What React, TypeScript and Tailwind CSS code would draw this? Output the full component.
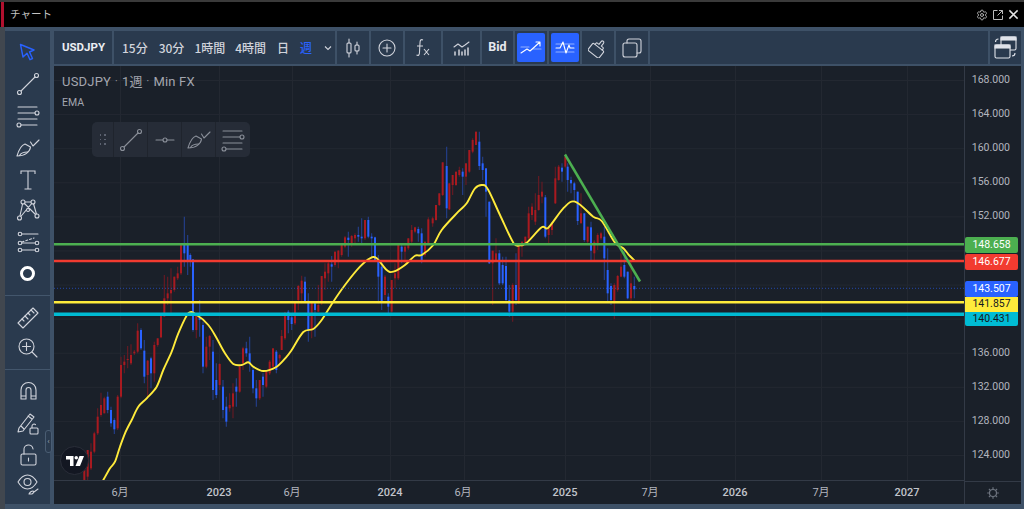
import React from "react";
import { Settings } from "lucide-react";

type C = [number, number, number, number, number, number];
// [x, wickTop, bodyTop, bodyBottom, wickBottom, 0 red / 1 blue] in reference crops' coordinates
const a: C[] = [
[73,760,780,810,810,0],[83,720,720,800,810,0],[93,700,725,775,780,0],[103,665,670,725,730,0],[113,595,620,670,675,0],[123,548,585,615,620,0],[133,560,565,610,610,0],[143,545,560,600,610,1],[153,590,600,640,650,1],[163,625,630,658,672,1],[173,555,560,655,660,0],[183,440,465,560,565,0],[193,435,455,465,490,0],[203,408,447,450,475,0],[213,403,435,460,465,0],[223,420,425,430,435,0],[233,340,362,425,430,0],[243,355,360,415,420,1],[253,390,422,500,520,1],[263,450,452,495,560,0],[273,440,445,490,535,1],[283,395,405,490,515,0],[293,385,385,405,410,0],[303,310,310,382,385,0],[313,195,265,320,320,0],[323,200,250,265,285,0],[333,175,240,250,315,0],[343,200,200,240,245,0],[353,170,190,205,210,0],[363,100,100,190,195,0],[373,20,100,130,170,1],[383,75,105,150,195,1],[391,130,135,155,170,1],[399,148,148,360,365,1],[409,310,310,360,385,0],[419,270,322,330,380,1],[429,335,345,470,490,1],[439,380,410,470,475,0],[449,375,378,410,450,0],[459,390,425,540,570,1],[469,460,510,555,565,1],[479,460,462,525,540,0],[489,510,530,600,625,1],[499,560,590,635,650,1],[509,550,585,595,605,0],[519,520,550,590,625,0],[529,505,530,545,590,1],[539,465,470,545,548,0],[549,410,415,460,480,0],[559,395,415,430,440,1],[569,380,430,460,485,1],[579,470,480,535,550,1],[589,510,535,565,590,1],[599,510,510,565,570,0],[609,490,500,525,560,1],[619,485,485,530,535,0],[629,450,455,490,495,0],[639,415,415,470,475,0],[649,420,425,480,490,1],[659,432,435,445,460,0],
];
const b: C[] = [
[5,600,618,660,660,0],[15,545,548,625,630,0],[25,540,545,570,610,1],[35,550,562,582,600,1],[45,515,515,580,585,0],[55,465,468,510,540,0],[65,437,452,490,520,0],[75,440,455,515,515,1],[85,490,512,600,635,1],[95,518,518,600,625,0],[105,515,520,540,620,1],[115,465,525,545,545,0],[125,438,438,520,525,0],[135,400,425,445,480,0],[145,395,400,430,455,0],[155,378,403,410,455,1],[165,365,365,405,410,0],[175,360,362,390,415,0],[185,345,345,375,380,0],[195,318,322,350,355,0],[205,305,323,330,380,1],[215,315,318,340,350,0],[225,310,315,325,340,0],[235,290,315,320,335,1],[245,265,320,325,340,1],[255,270,270,325,330,0],[265,260,270,320,325,1],[275,310,320,325,385,1],[285,320,322,390,395,1],[295,375,395,440,520,1],[305,395,410,515,540,1],[315,435,440,495,510,0],[325,490,500,530,555,1],[335,450,450,545,548,0],[345,400,430,445,475,0],[355,345,345,445,450,0],[365,340,350,365,400,1],[375,340,350,365,400,0],[385,325,325,355,360,0],[395,285,300,335,340,0],[405,290,292,305,310,0],[415,290,297,310,335,1],[425,295,310,395,400,1],[435,335,335,375,380,0],[445,262,268,340,340,0],
];
const c: C[] = [
[8,290,295,310,320,0],[18,255,255,300,302,0],[28,220,220,255,258,0],[38,127,127,225,228,0],[50,80,138,265,295,1],[58,190,190,268,270,0],[68,165,165,195,225,0],[78,155,155,195,198,0],[88,140,150,165,170,0],[98,145,155,170,225,1],[108,130,130,170,195,0],[118,90,90,155,158,0],[128,55,60,95,100,0],[138,35,35,75,75,0],[148,35,65,138,150,1],[158,110,130,150,180,1],[168,145,145,215,290,1],[178,245,245,430,432,1],[188,392,392,430,555,0],[198,355,400,420,425,0],[208,390,400,490,495,1],[218,410,435,490,495,1],[228,410,438,540,545,1],[238,495,540,575,590,1],[248,490,495,575,605,0],[258,400,495,540,555,1],[266,370,370,550,552,0],[276,365,365,380,410,0],[286,350,350,375,378,0],[296,260,280,355,360,0],[306,250,260,285,300,0],[316,220,270,305,315,0],[326,168,225,270,272,0],[336,185,215,230,250,0],[346,225,232,350,355,1],[356,320,325,345,375,0],[366,305,310,330,345,0],[376,140,175,250,252,0],[386,135,140,180,182,0],[396,130,143,155,185,1],[406,105,110,140,145,0],[413,130,140,180,215,1],[423,170,180,190,220,1],[433,185,190,210,245,1],[443,215,215,303,315,1],[453,220,280,310,310,0],[463,280,280,360,365,1],[473,320,320,365,370,0],[483,305,322,392,420,1],[493,360,365,400,425,0],[503,340,345,370,390,0],[513,335,340,355,360,0],[523,320,350,415,480,1],[533,385,450,520,545,1],[543,490,498,540,555,1],[553,490,495,545,597,0],[563,465,468,510,515,0],[573,400,440,470,472,0],[583,385,435,470,475,1],[593,455,455,535,538,1],[603,425,490,535,542,0],[613,470,498,508,535,1],
];
const conv = (list: C[], ox: number, oy: number): C[] =>
  list.map(([x, w1, b1, b2, w2, k]) => [ox + x / 3, oy + w1 / 3, oy + b1 / 3, oy + b2 / 3, oy + w2 / 3, k] as C);
const candles: C[] = [...conv(a, 60, 210), ...conv(b, 280, 130), ...conv(c, 430, 120)];

const emaRaw: [number[][], number, number][] = [
  [[[130,810],[150,775],[165,755],[180,710],[195,670],[215,630],[235,590],[260,565],[290,530],[310,480],[335,425],[355,370],[385,310],[410,315],[445,345],[470,385],[495,430],[520,462],[545,465],[565,457],[580,470],[610,483],[650,470],[680,440]], 60, 210],
  [[[35,660],[70,606],[100,597],[125,570],[160,515],[195,465],[240,410],[270,385],[290,385],[320,420],[340,425],[375,405],[405,377],[425,375],[460,345]], 280, 130],
  [[[35,330],[85,275],[110,250],[135,205],[158,195],[175,210],[210,285],[250,368],[270,376],[290,368],[335,322],[355,323],[400,265],[435,245],[490,290],[515,303],[555,368],[580,385],[595,403],[612,420]], 430, 120],
];
const emaPts = emaRaw.flatMap(([pts, ox, oy]) => pts.map(([x, y]) => [ox + x / 3, oy + y / 3]));
const ema = emaPts
  .map((p, i) => {
    if (i === 0) return `M${p[0].toFixed(1)} ${p[1].toFixed(1)}`;
    const p0 = emaPts[Math.max(0, i - 2)];
    const p1 = emaPts[i - 1];
    const p3 = emaPts[Math.min(emaPts.length - 1, i + 1)];
    const c1 = [p1[0] + (p[0] - p0[0]) / 6, p1[1] + (p[1] - p0[1]) / 6];
    const c2 = [p[0] - (p3[0] - p1[0]) / 6, p[1] - (p3[1] - p1[1]) / 6];
    return `C${c1[0].toFixed(1)} ${c1[1].toFixed(1)} ${c2[0].toFixed(1)} ${c2[1].toFixed(1)} ${p[0].toFixed(1)} ${p[1].toFixed(1)}`;
  })
  .join(" ");

const gridY = Array.from({ length: 12 }, (_, i) => 80.5 + i * 34.09);
const prices = ["168.000","164.000","160.000","156.000","152.000","","","","136.000","132.000","128.000","124.000"];
const times: [string, number, boolean][] = [["6月",120,false],["2023",219,true],["6月",292,false],["2024",390,true],["6月",463,false],["2025",565,true],["7月",650,false],["2026",735,true],["7月",821,false],["2027",907,true]];
const vlines = [120, 219, 292, 390, 464, 565, 650, 735, 821, 907];

const Ic = ({ children, w = 24, h = 24, className = "text-[#d1d4dc]" }: { children: React.ReactNode; w?: number; h?: number; className?: string }) => (
  <svg width={w} height={h} viewBox={`0 0 ${w} ${h}`} fill="none" stroke="currentColor" strokeWidth={1.1} className={className} strokeLinecap="round" strokeLinejoin="round">{children}</svg>
);

const BrushPaths = () => (<><path d="M1 20C3 13 6 9 9 8L14.500 11C14 16 9 20 1 20Z"/><path d="M3.500 19.500C5 17 8 16 11.500 16"/><path d="M14.500 6 17 10 23 4"/></>);
const FibPaths = () => (<><path d="M2 3h19M2 9h17M2 15h19M5 21h16"/><circle cx="21" cy="9" r="2"/><circle cx="3" cy="21" r="2"/></>);
const TrendPaths = () => (<><circle cx="3.500" cy="20.500" r="2"/><circle cx="20.500" cy="3.500" r="2"/><path d="M5 19 19 5"/></>);
const Rail = ({ children, h }: { children: React.ReactNode; h: string }) => (
  <div className={"flex items-center justify-center shrink-0 " + h}>{children}</div>
);
const RB = "#2a3a4e";

export default function App() {
  return (
    <div className="w-[1024px] h-[509px] overflow-hidden flex flex-col bg-[#3e5167] font-['Roboto','Noto_Sans_CJK_JP',sans-serif] text-[#d1d4dc]">
      {/* title bar */}
      <div className="h-[27px] shrink-0 flex items-stretch bg-black border-t-[2px] border-[#3a3a3a] pl-px">
        <div className="w-[3px] bg-[#b0102e]" />
        <div className="flex items-center pl-[6px] text-[10.500px] text-[#c4c4c4] font-['Noto_Sans_CJK_JP',sans-serif] pb-px">チャート</div>
        <div className="ml-auto flex items-center gap-[4px] pr-[5px] text-[#bcbcbc]">
          <Settings size={12} strokeWidth={1.8} />
          <svg width="12" height="12" viewBox="0 0 24 24" fill="none" stroke="currentColor" strokeWidth="2"><path d="M11 3H3v18h18v-8M14 3h7v7M21 3 11 13"/></svg>
          <svg width="11" height="11" viewBox="0 0 24 24" fill="none" stroke="#e4e4e4" strokeWidth="3.200"><path d="M3 3l18 18M21 3 3 21"/></svg>
        </div>
      </div>

      {/* body */}
      <div className="flex-1 min-h-0 flex border-l-[5px] border-[#41474f] pr-[3px] pt-[4px] pb-[5px] bg-[#3e5167]">
        {/* left rail */}
        <div className="w-[45px] shrink-0 flex flex-col bg-[#2a3a4e] mr-[4px]">
          <div className="h-[265px] shrink-0 pt-[5px] flex flex-col border-b border-[#43566c]">
            <Rail h="h-[32px]"><svg width="17" height="18" viewBox="0 0 17 18" fill="none" stroke="#2962ff" strokeWidth="1.400" strokeLinejoin="round"><path d="M1.500 1.500 15 7l-4.500 2 3 6.500-2.500 1.200-3-6.500L4 14Z"/></svg></Rail>
            <Rail h="h-[32px]"><Ic><TrendPaths /></Ic></Rail>
            <Rail h="h-[31px]"><Ic><FibPaths /></Ic></Rail>
            <Rail h="h-[34px]"><Ic><BrushPaths /></Ic></Rail>
            <Rail h="h-[30px]"><svg width="24" height="24" viewBox="0 0 24 24" fill="none" stroke="#d1d4dc" strokeWidth="1.100"><path d="M5 6V3h14v3M12 3v18M8.500 21h7"/></svg></Rail>
            <Rail h="h-[29px]"><Ic><path d="M3.500 20 7 4 21 18 17 4 3.500 20M7 4h10"/><circle cx="3.500" cy="20" r="2" fill={RB}/><circle cx="7" cy="4" r="2" fill={RB}/><circle cx="17" cy="4" r="2" fill={RB}/><circle cx="21" cy="18" r="2" fill={RB}/><circle cx="12" cy="12" r="1.500" fill={RB}/></Ic></Rail>
            <Rail h="h-[36px]"><Ic><path d="M6 4h16M6 20h13M6 13h13"/><path d="M6 12 18 8" strokeDasharray="2 2"/><circle cx="4" cy="4" r="1.800" fill={RB}/><circle cx="4" cy="13" r="1.800" fill={RB}/><circle cx="4" cy="20" r="1.800" fill={RB}/><circle cx="21" cy="13" r="1.800" fill={RB}/><circle cx="21" cy="20" r="1.800" fill={RB}/></Ic></Rail>
            <Rail h="h-[26px]"><div className="w-[15px] h-[15px] rounded-full border-[3px] border-white" /></Rail>
          </div>
          <div className="h-[74px] shrink-0 pt-[7px] flex flex-col border-b border-[#43566c]">
            <Rail h="h-[30px]"><Ic><path d="M2 17 17 2l5 5L7 22Z"/><path d="M6 13l2 2M9 10l3 3M12 7l2 2M15 4l3 3"/></Ic></Rail>
            <Rail h="h-[30px]"><Ic><circle cx="10.500" cy="10.500" r="7.500"/><path d="M6.500 10.500h8M10.500 6.500v8M16 16l5 5"/></Ic></Rail>
          </div>
          <div className="flex-1 flex flex-col pt-[5px] relative">
            <Rail h="h-[32px]"><Ic><path d="M5 20V11a7.500 7.500 0 0 1 15 0v9h-5v-9a2.500 2.500 0 0 0-5 0v9ZM5 17h5M15 17h5"/></Ic></Rail>
            <Rail h="h-[32px]"><Ic><path d="M3 17 14 3l4 3L7 20l-5 1ZM5 15l3 3M12 5l4 3"/><rect x="14" y="17" width="8" height="6" rx="1"/><path d="M16 17v-2a2 2 0 0 1 3.500-1.300"/></Ic></Rail>
            <Rail h="h-[32px]"><Ic><rect x="5" y="11" width="15" height="11" rx="1.500"/><path d="M8 11V7a4.500 4.500 0 0 1 9-1"/><path d="M12.500 15v3"/></Ic></Rail>
            <Rail h="h-[26px]"><Ic><path d="M2 10c3-5 6-7 9.500-7S18 5 21 10c-3 5-6 7-9.500 7S5 15 2 10Z"/><circle cx="11.500" cy="10" r="3.500"/><path d="M13 22c1-2 3-3 4-3 1 0 1 2-1 3ZM18 20l4-3"/></Ic></Rail>
            <div className="absolute right-[-2px] top-[60px] z-20 w-[7px] h-[23px] rounded-[3px] bg-[#2a3a4e] border border-[#4a5d73] flex items-center justify-center text-[8px] text-[#9aa5b1]">‹</div>
          </div>
        </div>

        {/* right column */}
        <div className="flex-1 min-w-0 flex flex-col">
          {/* toolbar */}
          <div className="h-[33px] shrink-0 flex items-stretch bg-[#2a3a4e] text-[12px] font-medium text-[#d1d4dc]">
            <div className="w-[60px] flex items-center justify-center font-bold text-[11.500px] text-[#eceef2] border-r-[2px] border-[#3e5167] pl-[1px]">USDJPY</div>
            <div className="w-[223px] flex items-center gap-[11px] pl-[8px] border-r-[2px] border-[#3e5167] font-['Noto_Sans_CJK_JP',sans-serif] text-[12px]">
              <span>15分</span><span>30分</span><span className="-ml-[1px]">1時間</span><span className="-ml-[1px]">4時間</span><span>日</span><span className="text-[#2962ff]">週</span>
              <svg className="ml-[1px]" width="8" height="6" viewBox="0 0 8 6" fill="none" stroke="#d1d4dc" strokeWidth="1.100"><path d="M1 1.500 4 4.500 7 1.500"/></svg>
            </div>
            <div className="w-[34px] flex items-center justify-center border-r-[2px] border-[#3e5167]">
              <Ic w={16} h={20}><rect x="2" y="5" width="4" height="10" rx="1"/><path d="M4 1v4M4 15v4"/><rect x="10" y="7" width="4" height="6" rx="1"/><path d="M12 4v3M12 13v3"/></Ic>
            </div>
            <div className="w-[34px] flex items-center justify-center border-r-[2px] border-[#3e5167]">
              <Ic w={18} h={18}><circle cx="9" cy="9" r="8"/><path d="M5 9h8M9 5v8"/></Ic>
            </div>
            <div className="w-[38px] flex items-center justify-center border-r-[2px] border-[#3e5167]">
              <svg width="14" height="18" viewBox="0 0 14 18" fill="none" stroke="#d1d4dc" strokeWidth="1.100"><path d="M7 1c-2-1-3 0-3 3l-.5 9c0 3-1 4-3 3"/><path d="M1 7h6M8 10l5 6M13 10l-5 6" /></svg>
            </div>
            <div className="w-[39px] flex items-center justify-center border-r-[2px] border-[#3e5167]">
              <Ic w={18} h={18}><path d="M1 8l4-3 4 3 3-2 4-3" /><path d="M2 16v-3M6 16v-5M9 16v-3M12 16v-5M15 16v-7" strokeWidth="1.500"/></Ic>
            </div>
            <div className="w-[33px] flex items-center justify-center font-bold text-[12.500px] text-[#e6e8ee] border-r-[2px] border-[#3e5167]">Bid</div>
            <div className="w-[34px] flex items-center justify-center border-r-[2px] border-[#3e5167]">
              <div className="w-[28px] h-[29px] rounded-[2px] bg-[#2962ff] flex items-center justify-center">
                <Ic w={22} h={18} className="text-white"><path d="M1 14l6-4 3 2 10-9M16 3h4v4"/><path d="M1 8h8M13 10h8" opacity="0.500"/></Ic>
              </div>
            </div>
            <div className="w-[33px] flex items-center justify-center border-r-[2px] border-[#3e5167]">
              <div className="w-[28px] h-[29px] rounded-[2px] bg-[#2962ff] flex items-center justify-center">
                <Ic w={20} h={18} className="text-white"><path d="M1 9h4l3-6 3 11 3-8 1 3h4"/><path d="M1 5h18M1 13h18" opacity="0.500"/></Ic>
              </div>
            </div>
            <div className="w-[34px] flex items-center justify-center border-r-[2px] border-[#3e5167]">
              <Ic w={20} h={20}><g transform="rotate(38 10 10)"><rect x="3" y="9" width="14" height="9" rx="1.500"/><path d="M5.500 9V7.500a1 1 0 0 1 1-1H8.500V3a1.500 1.500 0 0 1 3 0v3.500h2a1 1 0 0 1 1 1V9"/></g></Ic>
            </div>
            <div className="w-[34px] flex items-center justify-center border-r-[2px] border-[#3e5167]">
              <Ic w={20} h={20}><rect x="1" y="5" width="14" height="14" rx="2"/><path d="M5 5V3a2 2 0 0 1 2-2h10a2 2 0 0 1 2 2v10a2 2 0 0 1-2 2h-2"/></Ic>
            </div>
            <div className="flex-1" />
            <div className="w-[33px] flex items-center justify-center border-l-[2px] border-[#3e5167]">
              <svg width="23" height="23" viewBox="0 0 23 23" fill="none" stroke="#e0e3ea" strokeWidth="1.100"><rect x="7" y="1" width="15" height="13" rx="1.500"/><rect x="7" y="1" width="15" height="3" fill="#e0e3ea"/><rect x="1" y="9" width="15" height="13" rx="1.500" fill={RB}/><rect x="1" y="9" width="15" height="3" fill="#e0e3ea"/><path d="M1.500 6c0-2 1-3 3-3M21 17c0 2-1 3-3 3"/></svg>
            </div>
          </div>

          {/* chart */}
          <div className="flex-1 min-h-0 flex mt-[2px] bg-[#1a2029] relative">
            <div className="flex-1 min-w-0 flex flex-col border-r border-[#333a46]">
              <div className="flex-1 min-h-0 relative overflow-hidden">
                {/* chart drawing: viewBox keeps the coordinates as page coordinates */}
                <svg className="absolute left-0 top-0" width="910" height="414" viewBox="54 66 910 414">
                  {vlines.map((x) => <line key={x} x1={x + 0.5} x2={x + 0.5} y1={66} y2={480} stroke="#232831" strokeWidth="1" />)}
                  {gridY.map((y, i) => <line key={i} x1={54} x2={964} y1={y} y2={y} stroke="#232831" strokeWidth="1" />)}
                  {candles.map(([x, w1, b1, b2, w2, k], i) => (
                    <g key={i}>
                      <line x1={x} x2={x} y1={w1} y2={w2} stroke={k ? "#24408f" : "#6a1a24"} strokeWidth="1.100" />
                      <rect x={x - 1} y={b1} width="2" height={Math.max(1, b2 - b1)} fill={k ? "#2962ff" : "#a81a20"} />
                    </g>
                  ))}
                  <path d={ema} fill="none" stroke="#ffeb3b" strokeWidth="1.900" strokeLinejoin="round" strokeLinecap="round" />
                  <line x1={54} x2={964} y1={244.300} y2={244.300} stroke="#4caf50" strokeWidth="2.400" />
                  <line x1={54} x2={964} y1={261} y2={261} stroke="#f23b30" strokeWidth="2.600" />
                  <line x1={54} x2={964} y1={288.300} y2={288.300} stroke="#2962ff" strokeWidth="1" strokeDasharray="1 2" opacity="0.600" />
                  <line x1={54} x2={964} y1={302.300} y2={302.300} stroke="#ffeb3b" strokeWidth="2.400" />
                  <line x1={54} x2={964} y1={314.300} y2={314.300} stroke="#00bcd4" strokeWidth="3.400" />
                  <line x1={565} y1={154.500} x2={640} y2={281.500} stroke="#4caf50" strokeWidth="2.500" />
                </svg>

                <div className="absolute left-[8px] top-[7px] flex flex-col text-[#a3a6af] pointer-events-none">
                  <div className="text-[13px] leading-[17px] tracking-[0.2px] flex items-center">
                    <span>USDJPY</span><span className="mx-[4px] text-[10px]">·</span><span>1週</span><span className="mx-[4px] text-[10px]">·</span><span>Min FX</span>
                  </div>
                  <div className="text-[10.500px] mt-[6px] leading-[13px]">EMA</div>
                </div>

                {/* floating drawing bar */}
                <div className="absolute left-[38px] top-[56px] h-[35px] flex items-stretch rounded-[5px] bg-[#262c37] text-[#878c96]">
                  <div className="w-[22px] flex items-center justify-center border-r border-[#1f242d]">
                    <div className="grid grid-cols-2 gap-x-[3px] gap-y-[3px]">
                      {[0, 1, 2, 3, 4, 5].map((i) => <span key={i} className="w-[1.500px] h-[1.500px] bg-[#5c6270]" />)}
                    </div>
                  </div>
                  <div className="w-[34px] flex items-center justify-center border-r border-[#1f242d]"><Ic className="text-[#8a8f99]"><TrendPaths /></Ic></div>
                  <div className="w-[34px] flex items-center justify-center border-r border-[#1f242d]"><Ic className="text-[#8a8f99]"><path d="M3 12h7M14 12h7"/><circle cx="12" cy="12" r="2"/></Ic></div>
                  <div className="w-[34px] flex items-center justify-center border-r border-[#1f242d]"><Ic className="text-[#8a8f99]"><BrushPaths /></Ic></div>
                  <div className="w-[34px] flex items-center justify-center"><Ic className="text-[#8a8f99]"><FibPaths /></Ic></div>
                </div>

                {/* logo */}
                <div className="absolute left-[6px] bottom-[5px] w-[29px] h-[29px] rounded-full bg-[#131722] border border-[#2a2e39] flex items-center justify-center">
                  <svg width="18" height="10" viewBox="0 0 36 20" fill="#fff"><path d="M0 0h15v20H8V7H0Z"/><circle cx="20.500" cy="3.500" r="3.500"/><path d="M27 0h9l-8 20h-9Z"/></svg>
                </div>
              </div>
              {/* time axis */}
              <div className="h-[24px] shrink-0 relative border-t border-[#333a46] text-[11px] text-[#b2b5be]">
                {times.map(([t, x, bold]) => (
                  <span key={t + x} className={"absolute top-[4px] -translate-x-1/2 " + (bold ? "font-medium text-[#c2c5cc]" : "")} style={{ left: x - 54 }}>{t}</span>
                ))}
              </div>
            </div>

            {/* price axis */}
            <div className="w-[56px] shrink-0 flex flex-col relative text-[10.500px] text-[#b2b5be]">
              <div className="pt-[6px] flex flex-col items-end pr-[11px]">
                {prices.map((p, i) => <div key={i} className="h-[34.090px] leading-[16px]">{p}</div>)}
              </div>
              <div className="absolute left-0 w-[53px] top-[170.500px] h-[16px] leading-[16px] rounded-[2px] bg-[#4caf50] text-white text-center">148.658</div>
              <div className="absolute left-0 w-[53px] top-[188px] h-[16px] leading-[16px] rounded-[2px] bg-[#f23b30] text-white text-center">146.677</div>
              <div className="absolute left-0 w-[53px] top-[214.500px] h-[16px] leading-[16px] rounded-[2px] bg-[#2962ff] text-white text-center">143.507</div>
              <div className="absolute left-0 w-[53px] top-[230.500px] h-[15px] leading-[14px] bg-[#ffeb3b] text-[#131722] text-center">141.857</div>
              <div className="absolute left-0 w-[53px] top-[245.500px] h-[14px] leading-[14px] rounded-b-[2px] bg-[#00bcd4] text-[#131722] text-center">140.431</div>
              <div className="mt-auto h-[24px] flex items-center justify-start pl-[21px] border-t border-[#333a46] text-[#6f7580]">
                <svg width="14" height="14" viewBox="0 0 24 24" fill="none" stroke="currentColor" strokeWidth="2"><circle cx="12" cy="12" r="6"/><path d="M12 2v3M12 19v3M2 12h3M19 12h3M5 5l2 2M17 17l2 2M19 5l-2 2M7 17l-2 2"/></svg>
              </div>
            </div>
          </div>
        </div>
      </div>
    </div>
  );
}
